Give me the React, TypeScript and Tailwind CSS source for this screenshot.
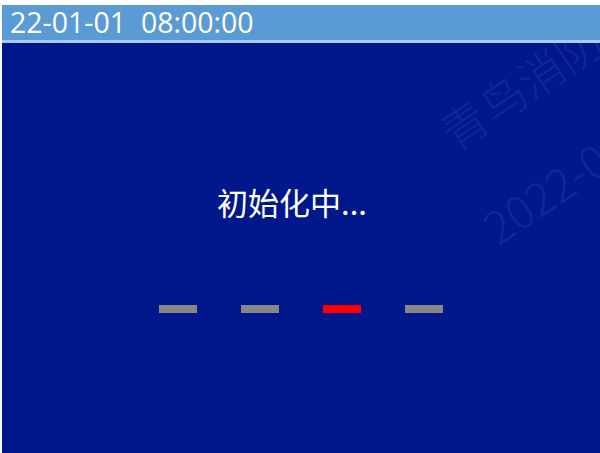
export default function App() {
  const bars = ["gray", "gray", "red", "gray"];

  return (
    <div className="h-[453px] w-[600px] bg-white pl-[2px] pt-[5px]">
      <div className="flex h-full flex-col">
        <div className="h-[38px] shrink-0 border-b-[3px] border-[#a9cbec] bg-[#5b9bd5] pl-[8px] font-['Open_Sans',sans-serif] text-[28.5px] leading-[34px] whitespace-pre text-white">
          22-01-01  08:00:00
        </div>

        <div className="relative flex flex-1 flex-col items-center overflow-hidden bg-[#00188c] pt-[142px]">
          <span className="absolute left-[455px] top-[66px] origin-bottom-left -rotate-[34deg] font-['Noto_Sans_CJK_SC',sans-serif] text-[46px] font-light leading-none whitespace-nowrap text-[#0f2797]">
            青鸟消防
          </span>
          <span className="absolute left-[498px] top-[160px] origin-bottom-left -rotate-[34deg] font-['Noto_Sans_CJK_SC',sans-serif] text-[46px] font-light leading-none whitespace-nowrap text-[#0f2797]">
            2022-01-01
          </span>

          <div className="relative mr-[18px] font-['Noto_Sans_CJK_SC',sans-serif] text-[31px] leading-[34px] text-white">
            初始化中...
          </div>

          <div className="relative mt-[86px] flex gap-[44px]">
            {bars.map((c, i) => (
              <div
                key={i}
                className={`h-[8px] w-[38px] ${c === "red" ? "bg-[#ff0000]" : "bg-[#878787]"}`}
              />
            ))}
          </div>
        </div>
      </div>
    </div>
  );
}
